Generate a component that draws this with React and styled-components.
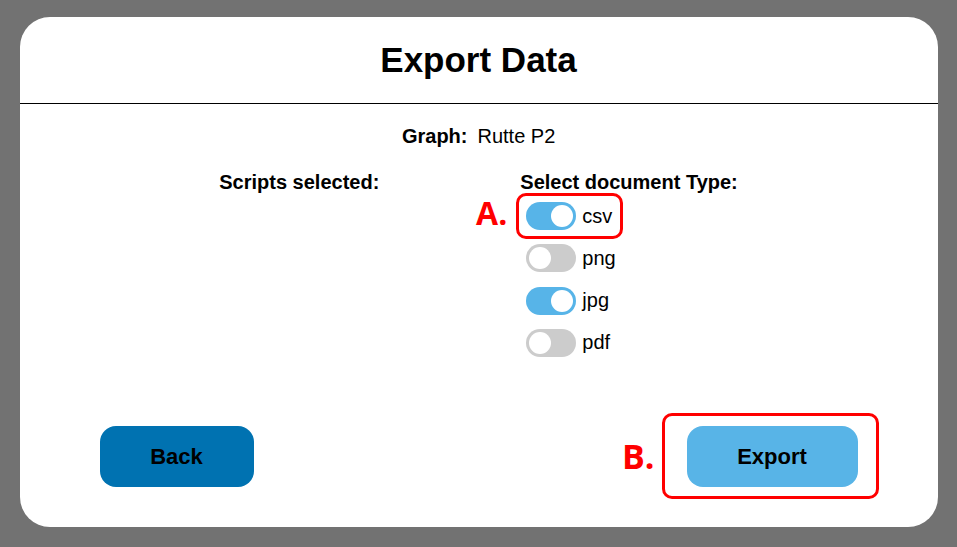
import React, { useState } from "react";
import styled, { createGlobalStyle } from "styled-components";

const GlobalStyle = createGlobalStyle`
    html, body {
        margin: 0;
        padding: 0;
        height: 100%;
    }

    body {
        background: #727272;
        font-family: "Liberation Sans", Arial, sans-serif;
        color: #000;
    }
`;

const Backdrop = styled.div`
    width: 957px;
    height: 547px;
    display: flex;
    align-items: flex-start;
    justify-content: center;
    padding-top: 17px;
    box-sizing: border-box;
`;

const Modal = styled.div`
    width: 918px;
    height: 510px;
    background: #fff;
    border-radius: 30px;
    display: flex;
    flex-direction: column;
    overflow: hidden;
`;

const ModalHeader = styled.div`
    padding: 23px 0 23px;
    border-bottom: 1px solid #000;
    text-align: center;

    h1 {
        margin: 0;
        font-size: 35px;
        font-weight: bold;
        line-height: 40px;
    }
`;

const ModalBody = styled.div`
    padding-top: 20.5px;
`;

const GraphRow = styled.div`
    display: grid;
    grid-template-columns: 1fr 1fr;
    column-gap: 10px;
    padding-right: 12px;
    font-size: 20px;
    line-height: 23px;

    strong {
        text-align: right;
    }
`;

const Columns = styled.div`
    display: flex;
    justify-content: center;
    gap: 141px;
    margin-top: 23px;
`;

const Column = styled.div`
    display: flex;
    flex-direction: column;
`;

const ColumnTitle = styled.strong`
    font-size: 20px;
    line-height: 23px;
`;

const TypeList = styled.div`
    display: flex;
    flex-direction: column;
    align-items: flex-start;
    gap: 14.3px;
    margin-top: 8.5px;
    padding-left: 6px;
`;

const TypeRow = styled.label`
    display: flex;
    align-items: center;
    gap: 6px;
    font-size: 20px;
    height: 28px;
    cursor: pointer;
`;

const Track = styled.span`
    position: relative;
    width: 50px;
    height: 28px;
    border-radius: 14px;
    background: ${props => (props.on ? "#57b4e8" : "#cccccc")};
    flex-shrink: 0;

    &::after {
        content: "";
        position: absolute;
        top: 3px;
        left: ${props => (props.on ? "25px" : "3px")};
        width: 22px;
        height: 22px;
        border-radius: 50%;
        background: #fff;
    }
`;

const Callout = styled.div`
    position: relative;

    &::before {
        content: "";
        position: absolute;
        top: ${props => props.inset[0]}px;
        right: ${props => props.inset[1]}px;
        bottom: ${props => props.inset[2]}px;
        left: ${props => props.inset[3]}px;
        border: 3px solid #ff0000;
        border-radius: 10px;
        pointer-events: none;
    }
`;

const CalloutMark = styled.span`
    position: absolute;
    top: 50%;
    right: calc(100% + ${props => props.offset}px);
    transform: translateY(calc(-50% + ${props => props.shift || 0}px));
    font-family: "Open Sans", "Liberation Sans", sans-serif;
    font-weight: 700;
    font-size: ${props => props.size}px;
    line-height: 1;
    color: #ff0000;
    white-space: nowrap;
`;

const ModalFooter = styled.div`
    margin-top: auto;
    display: flex;
    justify-content: space-between;
    align-items: center;
    padding: 0 80px 40px;
`;

const Button = styled.button`
    width: ${props => props.width}px;
    height: 61px;
    border: none;
    border-radius: 16px;
    background: ${props => (props.primary ? "#58b4e7" : "#0072b1")};
    color: #000;
    font-family: "Liberation Sans", Arial, sans-serif;
    font-size: 22px;
    font-weight: bold;
    cursor: pointer;
`;

const types = [
    { id: "csv", on: true },
    { id: "png", on: false },
    { id: "jpg", on: true },
    { id: "pdf", on: false }
];

const TypeToggle = ({ id, on, onToggle }) => (
    <TypeRow onClick={() => onToggle(id)}>
        <Track on={on ? 1 : 0} />
        {id}
    </TypeRow>
);

const App = () => {
    const [selected, setSelected] = useState(
        types.reduce((acc, t) => ({ ...acc, [t.id]: t.on }), {})
    );

    const toggle = id => setSelected(s => ({ ...s, [id]: !s[id] }));

    const rows = types.map(t => {
        const row = <TypeToggle key={t.id} id={t.id} on={selected[t.id]} onToggle={toggle} />;
        if (t.id !== "csv") return row;
        return (
            <Callout key={t.id} inset={[-9, -11, -9, -10]}>
                <CalloutMark size={32} offset={19} shift={-3}>
                    A.
                </CalloutMark>
                {row}
            </Callout>
        );
    });

    return (
        <Backdrop>
            <GlobalStyle />
            <Modal>
                <ModalHeader>
                    <h1>Export Data</h1>
                </ModalHeader>

                <ModalBody>
                    <GraphRow>
                        <strong>Graph:</strong>
                        <span>Rutte P2</span>
                    </GraphRow>

                    <Columns>
                        <Column>
                            <ColumnTitle>Scripts selected:</ColumnTitle>
                        </Column>
                        <Column>
                            <ColumnTitle>Select document Type:</ColumnTitle>
                            <TypeList>{rows}</TypeList>
                        </Column>
                    </Columns>
                </ModalBody>

                <ModalFooter>
                    <Button width={154}>Back</Button>
                    <Callout inset={[-13, -21, -12, -25]}>
                        <CalloutMark size={34} offset={32} shift={-1}>
                            B.
                        </CalloutMark>
                        <Button primary width={171}>
                            Export
                        </Button>
                    </Callout>
                </ModalFooter>
            </Modal>
        </Backdrop>
    );
};

export default App;
